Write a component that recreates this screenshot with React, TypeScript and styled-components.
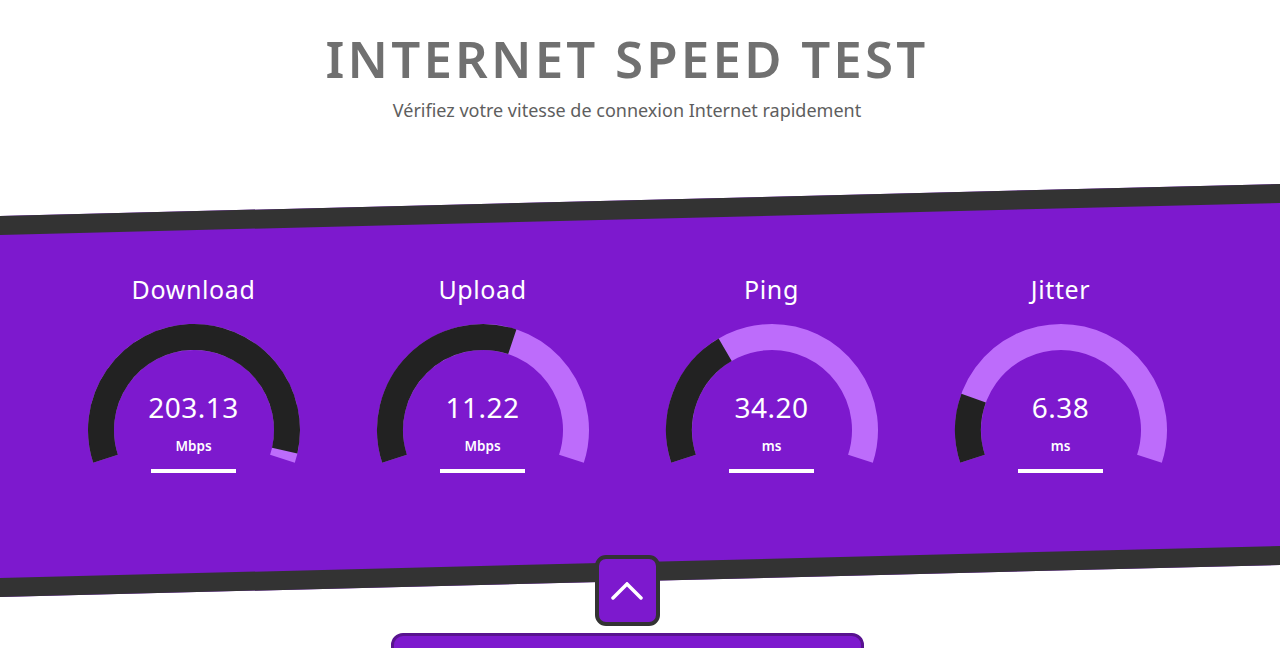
import React from 'react'
import styled, { createGlobalStyle } from 'styled-components'

const GlobalStyle = createGlobalStyle`
  body {
    margin: 0;
    background: #ffffff;
    font-family: 'Noto Sans', 'DejaVu Sans', sans-serif;
  }
`

const Page = styled.div`
  display: flex;
  flex-direction: column;
  align-items: center;
  padding-right: 26px;
  overflow: hidden;
`

const Header = styled.header`
  display: flex;
  flex-direction: column;
  align-items: center;
  padding-top: 28px;
  height: 200px;
  box-sizing: border-box;
`

const Title = styled.h1`
  margin: 0;
  font-size: 51px;
  line-height: 60px;
  font-weight: 600;
  color: #707070;
  letter-spacing: 3.2px;
`

const Subtitle = styled.p`
  margin: 10px 0 0;
  font-size: 18px;
  line-height: 24px;
  color: #5e5e5e;
`

const Band = styled.section`
  position: relative;
  width: 1280px;
  margin-right: -26px;
  padding-right: 26px;
  box-sizing: border-box;
  height: 381px;
  padding-top: 74px;
  display: flex;
  justify-content: center;

  &::before {
    content: '';
    position: absolute;
    inset: 0;
    background: #7d19ce;
    border-top: 19px solid #333333;
    border-bottom: 19px solid #333333;
    transform: skewY(-1.43deg);
    z-index: 0;
  }
`

const Meters = styled.div`
  position: relative;
  z-index: 1;
  display: grid;
  grid-template-columns: repeat(4, 289px);
`

const Meter = styled.div`
  display: flex;
  flex-direction: column;
  align-items: center;
`

const MeterName = styled.div`
  font-size: 25px;
  line-height: 30px;
  letter-spacing: 0.6px;
  color: #ffffff;
`

const Dial = styled.div`
  position: relative;
  width: 220px;
  height: 160px;
  margin-top: 14px;
`

const DialSvg = styled.svg`
  position: absolute;
  inset: 0;
`

const Readout = styled.div`
  position: relative;
  display: flex;
  flex-direction: column;
  align-items: center;
  padding-top: 72px;
  color: #ffffff;
`

const Value = styled.div`
  font-size: 28px;
  line-height: 34px;
  letter-spacing: 0.5px;
`

const Unit = styled.div`
  margin-top: 14px;
  font-size: 13.5px;
  line-height: 16px;
  font-weight: 600;
`

const Progress = styled.div`
  margin-top: 15px;
  width: 85px;
  height: 3.5px;
  background: #ffffff;
`

const ToggleButton = styled.button`
  position: relative;
  z-index: 2;
  margin-top: -26px;
  width: 65px;
  height: 71px;
  box-sizing: border-box;
  border: 4px solid #333333;
  border-radius: 11px;
  background: #7d19ce;
  display: flex;
  align-items: center;
  justify-content: center;
  padding: 0;
  cursor: pointer;
`

const StartPanel = styled.div`
  margin-top: 7px;
  width: 473px;
  height: 120px;
  box-sizing: border-box;
  border: 3px solid #58138f;
  border-radius: 12px;
  background: #7d19ce;
`

const CX = 110
const CY = 112
const R = 93
const START = -198
const SPAN = 216

const polar = (deg: number) => {
  const a = (deg * Math.PI) / 180
  return [CX + R * Math.cos(a), CY + R * Math.sin(a)]
}

const arc = (from: number, to: number) => {
  const [x1, y1] = polar(from)
  const [x2, y2] = polar(to)
  const large = to - from > 180 ? 1 : 0
  return `M ${x1} ${y1} A ${R} ${R} 0 ${large} 1 ${x2} ${y2}`
}

interface GaugeProps {
  name: string
  value: string
  unit: string
  amount: number
}

const Gauge = ({ name, value, unit, amount }: GaugeProps) => {
  const end = START + SPAN * amount
  return (
    <Meter>
      <MeterName>{name}</MeterName>
      <Dial>
        <DialSvg width="220" height="160" viewBox="0 0 220 160">
          <path d={arc(START, START + SPAN)} fill="none" stroke="#bd6cfb" strokeWidth="26" />
          <path d={arc(START, end)} fill="none" stroke="#222222" strokeWidth="26" />
        </DialSvg>
        <Readout>
          <Value>{value}</Value>
          <Unit>{unit}</Unit>
          <Progress />
        </Readout>
      </Dial>
    </Meter>
  )
}

const meters: GaugeProps[] = [
  { name: 'Download', value: '203.13', unit: 'Mbps', amount: 0.976 },
  { name: 'Upload', value: '11.22', unit: 'Mbps', amount: 0.585 },
  { name: 'Ping', value: '34.20', unit: 'ms', amount: 0.36 },
  { name: 'Jitter', value: '6.38', unit: 'ms', amount: 0.176 },
]

const App = () => {
  return (
    <Page>
      <GlobalStyle />
      <Header>
        <Title>INTERNET SPEED TEST</Title>
        <Subtitle>Vérifiez votre vitesse de connexion Internet rapidement</Subtitle>
      </Header>
      <Band>
        <Meters>
          {meters.map((m) => (
            <Gauge key={m.name} {...m} />
          ))}
        </Meters>
      </Band>
      <ToggleButton aria-label="Replier">
        <svg width="32" height="18" viewBox="0 0 32 18">
          <polyline points="2,16 16,2 30,16" fill="none" stroke="#ffffff" strokeWidth="3.5" strokeLinecap="round" />
        </svg>
      </ToggleButton>
      <StartPanel />
    </Page>
  )
}

export default App
